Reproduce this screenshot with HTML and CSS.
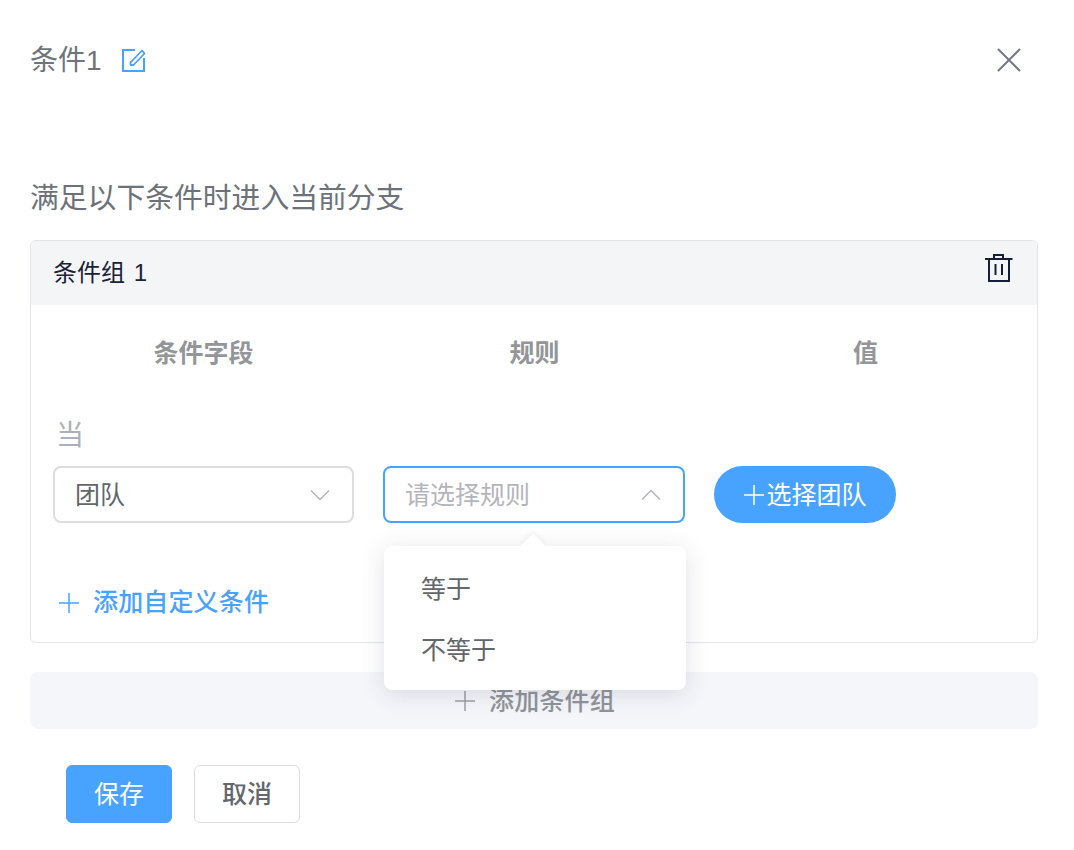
FILE: index.html
```html
<!DOCTYPE html>
<html lang="zh-CN">
<head>
<meta charset="utf-8">
<title>条件1</title>
<link rel="stylesheet" href="styles.css">
</head>
<body>
<main class="panel">
  <header class="top">
    <div class="title-wrap">
      <span class="title">条件1</span>
      <svg class="edit" width="24" height="24" viewBox="0 0 24 24" fill="none" stroke="#48a2ff" stroke-width="2">
        <path d="M13 2H1V23H22V10"/>
        <path d="M8.500 14V17H11.500L22.500 5.500 20 2.500 9 14z" stroke-linejoin="round" stroke-width="1.800"/>
      </svg>
    </div>
    <svg class="close" width="24" height="24" viewBox="0 0 24 24" fill="none" stroke="#757a82" stroke-width="2" stroke-linecap="round">
      <path d="M1.500 1.500L22.500 22.500M22.500 1.500L1.500 22.500"/>
    </svg>
  </header>

  <h2 class="subtitle">满足以下条件时进入当前分支</h2>

  <section class="group">
    <div class="group-head">
      <span class="group-name">条件组 1</span>
      <svg class="trash" width="28" height="30" viewBox="0 0 28 30" fill="none" stroke="#14203a" stroke-width="2">
        <path d="M0 6H27.500M9 6V2H18V6M4 6V28H24V6M10.500 11V22M17 11V22"/>
      </svg>
    </div>
    <div class="group-body">
      <div class="cols">
        <span>条件字段</span>
        <span>规则</span>
        <span>值</span>
      </div>
      <div class="when">当</div>
      <div class="row">
        <div class="select">
          <span class="val">团队</span>
          <svg width="20" height="12" viewBox="0 0 20 12" fill="none" stroke="#b4b6bb" stroke-width="1.500"><path d="M1 1.500L10 10.500L19 1.500"/></svg>
        </div>
        <div class="select-wrap">
          <div class="select open">
            <span class="ph">请选择规则</span>
            <svg width="20" height="12" viewBox="0 0 20 12" fill="none" stroke="#b4b6bb" stroke-width="1.500"><path d="M1 10.500L10 1.500L19 10.500"/></svg>
          </div>
          <div class="menu">
            <i class="arrow"></i>
            <div class="opt">等于</div>
            <div class="opt">不等于</div>
          </div>
        </div>
        <button class="pick"><svg width="22" height="22" viewBox="0 0 22 22" stroke="#fff" stroke-width="1.500"><path d="M11 1V21M1 11H21"/></svg><span class="lift">选择团队</span></button>
      </div>
      <div class="add-cond">
        <svg width="20" height="20" viewBox="0 0 20 20" stroke="#48a2ff" stroke-width="1.500"><path d="M10 0V20M0 10H20"/></svg>
        <span class="wide">添加自定义条件</span>
      </div>
    </div>
  </section>

  <div class="add-group">
    <svg width="20" height="20" viewBox="0 0 20 20" stroke="#9b9ea4" stroke-width="1.500"><path d="M10 0V20M0 10H20"/></svg>
    <span class="lift wide">添加条件组</span>
  </div>

  <footer class="actions">
    <button class="btn primary"><span class="lift">保存</span></button>
    <button class="btn"><span class="lift">取消</span></button>
  </footer>
</main>
</body>
</html>
```
FILE: styles.css
```css
* { box-sizing: border-box; }
html, body { margin: 0; padding: 0; background: #fff; }
body {
  font-family: "Liberation Sans", "Noto Sans CJK SC", sans-serif;
  color: #606266;
  width: 1074px;
  height: 850px;
  overflow: hidden;
}
.panel { padding: 38px 36px 0 30px; }
.top {
  display: flex;
  justify-content: space-between;
  align-items: center;
  height: 44px;
  padding-right: 17px;
}
.title-wrap { display: flex; align-items: center; gap: 21px; }
.title { font-size: 28px; line-height: 44px; color: #6f747b; padding-top: 2px; }
.edit { margin-left: -1px; }
.subtitle {
  margin: 94px 0 0;
  font-size: 28.800px;
  font-weight: 400;
  line-height: 44px;
  color: #6d727a;
}
.group {
  margin-top: 20px;
  height: 403px;
  border: 1px solid #e3e4e8;
  border-radius: 6px;
}
.group-head {
  height: 64px;
  background: #f4f5f7;
  display: flex;
  justify-content: space-between;
  padding: 12px 24px 0 22px;
  border-radius: 6px 6px 0 0;
}
.group-name { font-size: 24px; line-height: 40px; color: #1b2235; word-spacing: 2px; }
.group-body { padding: 0 0 0 22px; }
.cols {
  display: grid;
  grid-template-columns: repeat(3, 331px);
  margin: 27px 0 0 -15px;
  text-align: center;
  font-size: 25px;
  font-weight: 700;
  line-height: 42px;
  color: #939699;
}
.when { margin-top: 40px; font-size: 28px; line-height: 44px; color: #adb1b7; padding-left: 3px; }
.row { display: flex; margin-top: 8px; align-items: flex-start; gap: 29px; }
.select-wrap { position: relative; }
.select {
  width: 301px;
  height: 57px;
  border: 2px solid #dcdde2;
  border-radius: 8px;
  display: flex;
  align-items: center;
  justify-content: space-between;
  padding: 0 22px 0 20px;
  font-size: 25px;
  background: #fff;
}
.select span { padding-bottom: 4px; }
.select.open { border-color: #48a2ff; width: 302px; }
.val { color: #63666b; }
.ph { color: #b3b5ba; }
.menu {
  position: absolute;
  left: 1px;
  top: 80px;
  width: 302px;
  height: 144px;
  background: #fff;
  border-radius: 8px;
  box-shadow: 0 4px 24px rgba(40, 50, 80, .14);
  padding: 13px 0;
  z-index: 2;
}
.arrow {
  position: absolute;
  left: 140px;
  top: -9px;
  width: 18px;
  height: 18px;
  background: #fff;
  transform: rotate(45deg);
  box-shadow: -2px -2px 4px rgba(40, 50, 80, .05);
}
.opt { position: relative; height: 61px; line-height: 60px; padding-left: 37px; font-size: 25px; color: #63666b; }
.pick {
  height: 57px;
  width: 182px;
  border: 0;
  border-radius: 29px;
  background: #48a2ff;
  color: #fff;
  font: inherit;
  font-size: 25px;
  display: flex;
  align-items: center;
  justify-content: center;
  gap: 1px;
  padding: 0;
}
.lift { display: block; padding-bottom: 4px; }
.add-cond {
  display: flex;
  align-items: center;
  gap: 14px;
  margin: 58px 0 0 6px;
  font-size: 25px;
  font-weight: 500;
  line-height: 42px;
  color: #48a2ff;
}
.wide { letter-spacing: .15px; }
.add-cond .wide { padding-bottom: 2px; }
.add-group {
  margin-top: 29px;
  height: 57px;
  background: #f5f6fa;
  border-radius: 8px;
  display: flex;
  align-items: center;
  justify-content: center;
  gap: 14px;
  font-size: 25px;
  font-weight: 500;
  color: #909399;
}
.add-group svg { margin-left: 2px; }
.actions { display: flex; gap: 22px; margin: 36px 0 0 36px; }
.btn {
  width: 106px;
  height: 58px;
  border: 1px solid #dcdde2;
  border-radius: 6px;
  background: #fff;
  color: #63666b;
  font: inherit;
  font-size: 25px;
  font-weight: 500;
  padding: 0;
}
.btn.primary { background: #48a2ff; border-color: #48a2ff; color: #fff; font-weight: 400; }
```
